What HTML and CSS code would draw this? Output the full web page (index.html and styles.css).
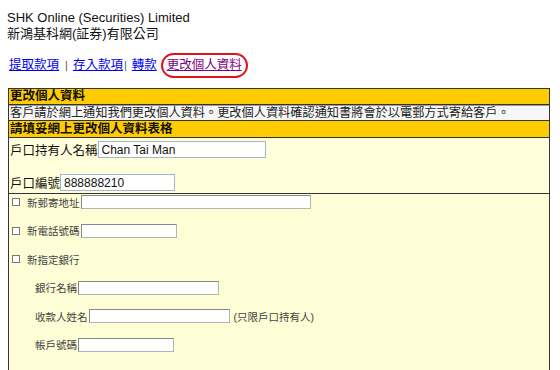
FILE: index.html
```html
<!DOCTYPE html>
<html lang="zh-Hant">
<head>
    <meta charset="UTF-8">
    <title>更改個人資料</title>
    <link rel="stylesheet" href="styles.css">
</head>
<body>
    <div class="brand">
        <div class="brand-en">SHK Online (Securities) Limited</div>
        <div class="brand-zh">新鴻基科網(証券)有限公司</div>
    </div>

    <div class="links">
        <a href="#" class="link">提取款項</a><span class="sep sep-a">|</span><a href="#" class="link">存入款項</a><span class="sep sep-b">|</span><a href="#" class="link">轉款</a>
        <span class="circled"><a href="#" class="link visited">更改個人資料</a></span>
    </div>

    <div class="panel">
        <div class="bar bar-first">更改個人資料</div>
        <div class="note">客戶請於網上通知我們更改個人資料。更改個人資料確認通知書將會於以電郵方式寄給客戶。</div>
        <div class="bar bar-second">請填妥網上更改個人資料表格</div>

        <div class="form-top">
            <div class="field">
                <span class="label">戶口持有人名稱</span><input class="text name" type="text" value="Chan Tai Man">
            </div>
            <div class="field">
                <span class="label">戶口編號</span><input class="text account" type="text" value="888888210">
            </div>
        </div>

        <div class="form-low">
            <div class="row">
                <span class="box"></span><span class="small">新郵寄地址</span><span class="input w-230"></span>
            </div>
            <div class="row">
                <span class="box"></span><span class="small">新電話號碼</span><span class="input w-96"></span>
            </div>
            <div class="row">
                <span class="box"></span><span class="small">新指定銀行</span>
            </div>
            <div class="row sub">
                <span class="small">銀行名稱</span><span class="input w-141"></span>
            </div>
            <div class="row sub">
                <span class="small">收款人姓名</span><span class="input w-141"></span><span class="small hint">(只限戶口持有人)</span>
            </div>
            <div class="row sub">
                <span class="small">帳戶號碼</span><span class="input w-96"></span>
            </div>
        </div>
    </div>
</body>
</html>
```

FILE: styles.css
```css
html {
    overflow: hidden;
}

body {
    margin: 0;
    padding: 10px 8px 0 8px;
    font-family: "Liberation Sans", "Noto Sans CJK TC", sans-serif;
    font-size: 12.5px;
    color: #111;
    background-color: #fff;
}

.brand {
    margin-left: -1px;
    font-size: 13px;
    line-height: 16px;
}

.links {
    margin-top: 11px;
    height: 25px;
    line-height: 25px;
    display: flex;
    align-items: center;
    margin-left: 1px;
}

.link {
    color: #0000ee;
    text-decoration: underline;
}

.link.visited {
    color: #800080;
}

.sep {
    color: #555;
    font-size: 11px;
}

.sep-a {
    margin: 0 5px 0 6px;
}

.sep-b {
    margin: 0 5px 0 1px;
}

.circled {
    display: inline-block;
    height: 21px;
    line-height: 21px;
    margin-left: 4px;
    padding: 0 4px 0 4px;
    border: 2px solid #e0141e;
    border-radius: 13px;
}

.panel {
    margin-top: 10px;
    width: 540px;
    border: 1px solid #333;
    border-bottom: none;
}

.bar {
    background-color: #ffcc00;
    font-weight: bold;
    padding-left: 1px;
    border-bottom: 1px solid #333;
}

.bar-first {
    height: 15px;
    line-height: 15px;
}

.bar-second {
    height: 16px;
    line-height: 16px;
}

.note {
    height: 14px;
    line-height: 14px;
    padding-left: 1px;
    font-size: 12.2px;
    background-color: #f7f7f7;
    border-top: 1px solid #9a9a9a;
    border-bottom: 1px solid #333;
    color: #222;
}

.form-top {
    background-color: #ffffdb;
    height: 56px;
    padding: 3px 0 0 1px;
    box-sizing: border-box;
    border-bottom: 1px solid #333;
}

.field {
    display: flex;
    align-items: center;
    height: 17px;
    margin-bottom: 16px;
}

.text {
    box-sizing: border-box;
    height: 17px;
    margin: 0;
    padding: 0 3px;
    border: 1px solid #a7b6c6;
    background-color: #fff;
    font-family: "Liberation Sans", sans-serif;
    font-size: 12px;
    color: #111;
}

.text.name {
    width: 168px;
}

.text.account {
    width: 115px;
}

.form-low {
    background-color: #fdfdd6;
    height: 180px;
    padding-top: 1px;
    box-sizing: border-box;
}

.row {
    display: flex;
    align-items: center;
    height: 14px;
    margin-bottom: 14.5px;
    padding-left: 3px;
}

.row.sub {
    padding-left: 26px;
}

.box {
    width: 6px;
    height: 6px;
    border: 1px solid #777;
    background-color: #fff;
    margin-right: 7px;
}

.small {
    font-size: 10.5px;
    color: #444;
}

.hint {
    margin-left: 4px;
}

.input {
    box-sizing: border-box;
    height: 14px;
    margin-left: 1px;
    border: 1px solid #b4b4b4;
    border-top-color: #888;
    border-left-color: #888;
    background-color: #fff;
}

.w-230 {
    width: 230px;
}

.w-141 {
    width: 141px;
}

.w-96 {
    width: 96px;
}
```
